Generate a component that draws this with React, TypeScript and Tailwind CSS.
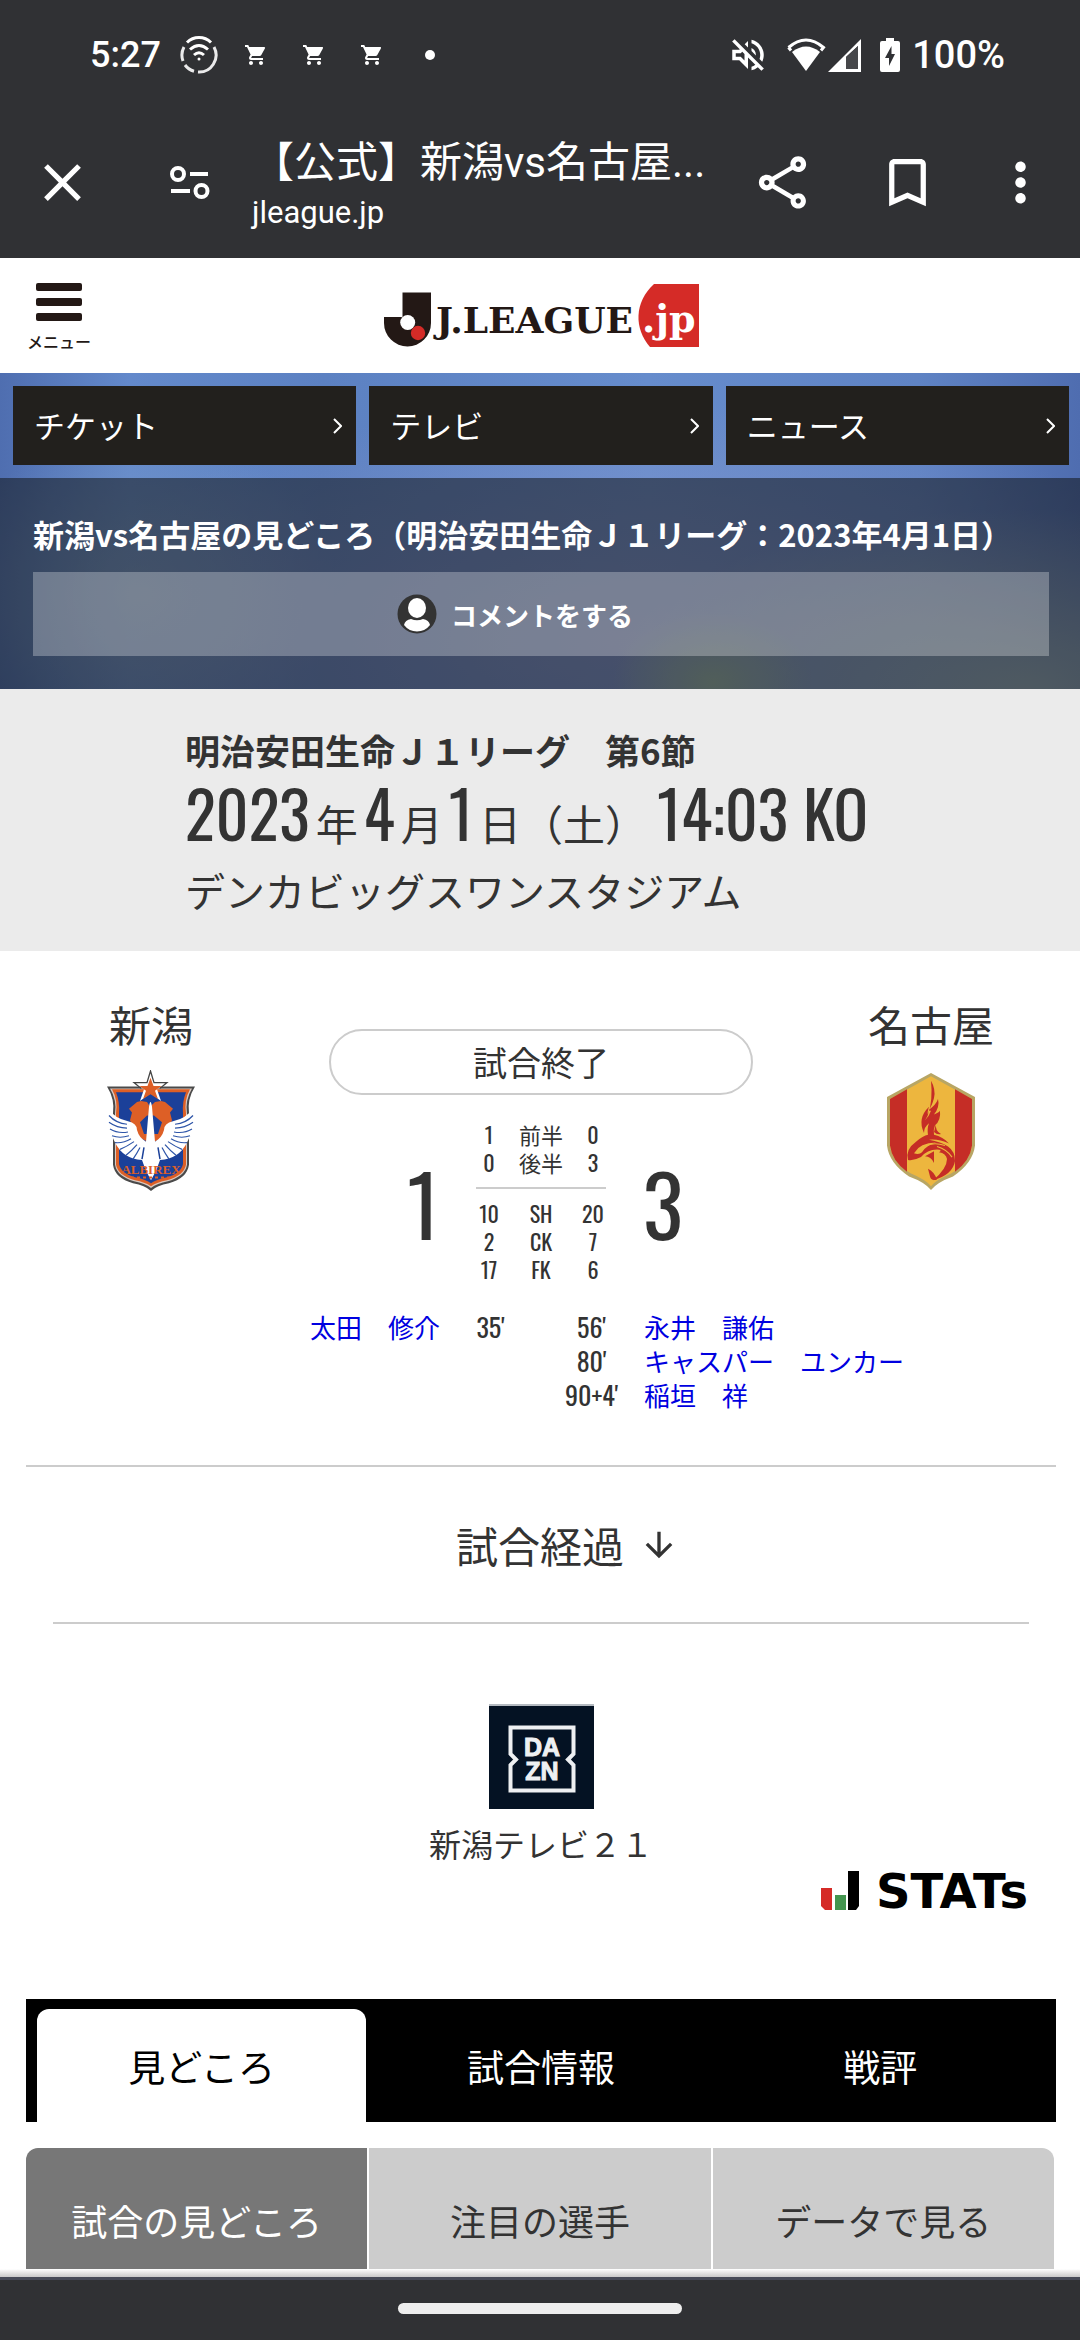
import React from "react"
import {
  MdArrowDownward,
  MdBookmarkBorder,
  MdClose,
  MdMoreVert,
  MdOutlineShare,
  MdOutlineVolumeOff,
  MdShoppingCart,
} from "react-icons/md"

const NARROW =
  "font-[family-name:Oswald,'Liberation_Sans_Narrow','Roboto_Condensed','Open_Sans_Condensed',Roboto,'Noto_Sans_CJK_JP',sans-serif]"

const links = ["チケット", "テレビ", "ニュース"]

const halves = [
  ["1", "前半", "0"],
  ["0", "後半", "3"],
]

const stats = [
  ["10", "SH", "20"],
  ["2", "CK", "7"],
  ["17", "FK", "6"],
]

const homeGoals = [{name: "太田　修介", time: "35'"}]

const awayGoals = [
  {name: "永井　謙佑", time: "56'"},
  {name: "キャスパー　ユンカー", time: "80'"},
  {name: "稲垣　祥", time: "90+4'"},
]

const tabs = ["見どころ", "試合情報", "戦評"]
const subTabs = ["試合の見どころ", "注目の選手", "データで見る"]

/**
 * Match preview page of the league site, inside a mobile browser tab
 */
export default function App() {
  return (
    <div className="flex min-h-screen w-full flex-col bg-white font-['Noto_Sans_CJK_JP',sans-serif] text-[#333]">
      <StatusBar />
      <BrowserBar />
      <SiteHeader />
      <Hero />
      <MatchInfo />
      <main className="flex flex-col">
        <Scoreboard />
        <Goals />
        <Broadcast />
        <Tabs />
      </main>
      <footer className="mt-auto">
        <div className="h-2 bg-linear-to-b from-white to-[#c9c9c9]" />
        <div className="flex h-[63px] items-center justify-center border-t-3 border-[#474b58] bg-[#303134] pb-1">
          <div className="h-[11px] w-[284px] rounded-full bg-[#eee]" />
        </div>
      </footer>
    </div>
  )
}

function StatusBar() {
  return (
    <div className="flex h-[106px] items-center justify-between bg-[#303134] pt-1 pr-[75px] pl-[90px] font-['Roboto',sans-serif] text-white">
      <div className="flex items-center">
        <span className="text-[36px] leading-[40px] font-medium">5:27</span>
        <svg
          className="ml-[19px] size-[38px]"
          viewBox="0 0 38 38"
          fill="none"
          stroke="currentColor"
          strokeWidth="3"
        >
          <path d="M7 6.500A17 17 0 0 1 31 6.500" />
          <path
            d="M34 11A17 17 0 0 1 18 36M14 35.300A17 17 0 0 1 5 29M3 25A17 17 0 0 1 4 11"
            opacity=".9"
          />
          <path d="M10 13.500Q19 5.500 28 13.500M14 19Q19 14.500 24 19" />
          <circle cx="19" cy="23" r="1.500" fill="currentColor" stroke="none" />
        </svg>
        <div className="ml-[26px] flex gap-[34px]">
          <MdShoppingCart className="size-6" />
          <MdShoppingCart className="size-6" />
          <MdShoppingCart className="size-6" />
        </div>
        <span className="ml-[41px] size-[10px] rounded-full bg-white" />
      </div>
      <div className="flex items-center">
        <MdOutlineVolumeOff className="size-[42px]" />
        <svg className="ml-[17px] h-[34px] w-[40px]" viewBox="0 0 40 34">
          <path
            d="M2.500 9.500Q20 -5.500 37.500 9.500L35 12.500"
            fill="none"
            stroke="currentColor"
            strokeWidth="3"
          />
          <path d="M2.500 9.500L5 12.500" stroke="currentColor" strokeWidth="3" />
          <path d="M6 14Q20 3 34 14L20 33Z" fill="currentColor" />
        </svg>
        <svg className="ml-[2px] h-[34px] w-[34px]" viewBox="0 0 34 34">
          <path
            fillRule="evenodd"
            d="M0 34L33 1V34ZM18 19V31H30V8Z"
            fill="currentColor"
          />
          <path d="M18 19V31H30V8Z" fill="#46474a" />
        </svg>
        <svg className="ml-[18px] h-[34px] w-5" viewBox="0 0 20 34">
          <path
            d="M6 0H14V3H18Q20 3 20 5V32Q20 34 18 34H2Q0 34 0 32V5Q0 3 2 3H6Z"
            fill="currentColor"
          />
          <path d="M11.500 8L5 20H9V28L15 16H11.500Z" fill="#303134" />
        </svg>
        <span className="ml-3 text-[38px] leading-[40px] font-medium">
          100%
        </span>
      </div>
    </div>
  )
}

function BrowserBar() {
  return (
    <div className="flex h-[152px] items-center bg-[#303134] pr-[28px] pl-[31px] font-['Roboto','Noto_Sans_CJK_JP',sans-serif] text-white">
      <button aria-label="閉じる" type="button">
        <MdClose className="size-[63px]" />
      </button>
      <button className="ml-16" aria-label="サイト情報" type="button">
        <svg
          className="size-[63px]"
          viewBox="0 0 63 63"
          fill="none"
          stroke="currentColor"
          strokeWidth="4"
        >
          <circle cx="20" cy="23" r="6" />
          <circle cx="43.500" cy="40" r="6" />
          <path d="M32 23H50M13 40H32" />
        </svg>
      </button>
      <div className="ml-[31px] min-w-0 flex-1 pt-[6px]">
        <h1 className="text-[42px] leading-[56px] whitespace-nowrap">
          【公式】新潟vs名古屋...
        </h1>
        <p className="text-[31px] leading-[44px]">jleague.jp</p>
      </div>
      <div className="flex items-center gap-[62px]">
        <button aria-label="共有" type="button">
          <MdOutlineShare className="size-[63px]" />
        </button>
        <button aria-label="ブックマーク" type="button">
          <MdBookmarkBorder className="size-[63px]" />
        </button>
        <button className="-ml-3" aria-label="その他" type="button">
          <MdMoreVert className="size-[63px]" />
        </button>
      </div>
    </div>
  )
}

function SiteHeader() {
  return (
    <header className="grid h-[115px] grid-cols-[1fr_auto_1fr] items-center pr-6 pl-[26px]">
      <button
        className="flex w-[66px] flex-col items-center pt-1 text-[#231815]"
        type="button"
      >
        <span className="flex flex-col gap-[7px]">
          <span className="h-2 w-[46px] rounded-xs bg-[#231815]" />
          <span className="h-2 w-[46px] rounded-xs bg-[#231815]" />
          <span className="h-2 w-[46px] rounded-xs bg-[#231815]" />
        </span>
        <span className="mt-2 text-[16px] leading-[24px] font-medium whitespace-nowrap">
          メニュー
        </span>
      </button>
      <a href="#top" aria-label="J.LEAGUE.jp">
        <svg className="h-[63px] w-[315px]" viewBox="0 0 315 63">
          <path
            d="M18.500 8.500H47V39A23.500 23.500 0 0 1 0 39V33H18.500Z"
            fill="#231815"
          />
          <circle cx="23.700" cy="38.500" r="7.500" fill="#fff" />
          <circle cx="34" cy="49" r="7.200" fill="#d52b27" />
          <path d="M270 0H315V63H266C250 45 250 18 270 0Z" fill="#d52b27" />
          <text
            className="font-['DejaVu_Serif',serif] text-[36px] font-bold"
            x="52"
            y="49"
            fill="#231815"
          >
            J.LEAGUE
          </text>
          <text
            className="font-['DejaVu_Serif',serif] text-[38px] font-bold"
            x="258"
            y="48"
            fill="#fff"
          >
            .jp
          </text>
        </svg>
      </a>
    </header>
  )
}

function Hero() {
  return (
    <section className="bg-[radial-gradient(100px_70px_at_66%_98%,#a9c497aa,transparent),radial-gradient(420px_180px_at_95%_100%,#a5b8b8cc,transparent),radial-gradient(600px_240px_at_58%_85%,#979ccfaa,transparent),radial-gradient(200px_160px_at_13%_70%,#86a3c4aa,transparent),linear-gradient(90deg,#4f6eb0,#6389cb_12%,#5c81c2_30%,#668ccc_60%,#5f83c4_85%,#4f6db0)] text-white">
      <nav className="grid grid-cols-3 gap-[13px] px-[13px] py-[13px] pr-[11px]">
        {links.map((label) => (
          <a
            className="flex h-[79px] items-center justify-between bg-[#22201d] pr-[14px] pl-[21px] text-[31px]"
            href="#top"
            key={label}
          >
            {label}
            <svg
              className="h-4 w-[9px]"
              viewBox="0 0 9 16"
              fill="none"
              stroke="currentColor"
              strokeWidth="2"
            >
              <path d="M1 1L8 8L1 15" />
            </svg>
          </a>
        ))}
      </nav>
      <div className="bg-[#131619]/55 px-[33px] pt-8 pb-[33px] pr-[31px]">
        <h2 className="text-[31px] leading-[48px] font-bold whitespace-nowrap">
          新潟vs名古屋の見どころ（明治安田生命Ｊ１リーグ：2023年4月1日）
        </h2>
        <button
          className="mt-[14px] flex h-[84px] w-full items-center justify-center gap-[14px] bg-white/28 pr-[52px] text-[26px] font-bold"
          type="button"
        >
          <svg className="size-10" viewBox="0 0 40 40">
            <circle cx="20" cy="20" r="19.500" fill="#333" />
            <ellipse cx="20" cy="14" rx="9" ry="10" fill="#fff" />
            <path
              d="M7 31Q8 26 14 25Q20 27.500 26 25Q32 26 33 31Q28 37.500 20 37.500Q12 37.500 7 31Z"
              fill="#fff"
            />
          </svg>
          コメントをする
        </button>
      </div>
    </section>
  )
}

function MatchInfo() {
  return (
    <section className="bg-[#ebebeb] pt-9 pb-9">
      <div className="mx-auto w-[710px] max-w-full">
        <p className="text-[35px] leading-[50px] font-bold">
          明治安田生命Ｊ１リーグ　第6節
        </p>
        <p
          className={`flex h-[90px] items-baseline text-[42px] leading-[74px] whitespace-nowrap ${NARROW}`}
        >
          <span className="text-[64px]">2023</span>
          <span className="mx-[6px]">年</span>
          <span className="text-[64px]">4</span>
          <span className="mx-[6px]">月</span>
          <span className="text-[64px]">1</span>
          <span className="mr-[10px] ml-[6px]">日（土）</span>
          <span className="text-[64px]">14:03 KO</span>
        </p>
        <p className="text-[40px] leading-[50px]">
          デンカビッグスワンスタジアム
        </p>
      </div>
    </section>
  )
}

function Scoreboard() {
  return (
    <section className="grid grid-cols-[250px_1fr_250px] pr-6 pl-[26px]">
      <Team name="新潟">
        <AlbirexCrest />
      </Team>
      <div className="flex flex-col items-center pt-[78px]">
        <p className="h-[66px] w-[424px] rounded-full border-2 border-[#ccc] text-center text-[34px] leading-[62px]">
          試合終了
        </p>
        <div
          className={`mt-[25px] flex items-center gap-[37px] ${NARROW}`}
        >
          <span className="w-[50px] text-right text-[84px] leading-[100px]">
            1
          </span>
          <table className="w-[130px] table-fixed text-center text-[22px] leading-[28px]">
            <tbody>
              {halves.map((row, i) => (
                <StatRow
                  className={i === 1 ? "pb-[11px]" : ""}
                  key={row[1]}
                  {...{row}}
                />
              ))}
            </tbody>
            <tbody className="border-t-2 border-[#ccc]">
              {stats.map((row, i) => (
                <StatRow
                  className={i === 0 ? "pt-[10px]" : ""}
                  key={row[1]}
                  {...{row}}
                />
              ))}
            </tbody>
          </table>
          <span className="w-[50px] text-left text-[84px] leading-[100px]">
            3
          </span>
        </div>
      </div>
      <Team name="名古屋">
        <GrampusCrest />
      </Team>
    </section>
  )
}

function StatRow({row, className}: {row: string[]; className: string}) {
  const [home, label, away] = row
  return (
    <tr>
      <td className={`w-[26px] p-0 ${className}`}>{home}</td>
      <th className={`p-0 font-normal ${className}`} scope="row">
        {label}
      </th>
      <td className={`w-[26px] p-0 ${className}`}>{away}</td>
    </tr>
  )
}

function Team({name, children}: {name: string; children: React.ReactNode}) {
  return (
    <div className="flex flex-col items-center pt-[48px]">
      <h3 className="mb-[21px] text-[42px] leading-[50px]">{name}</h3>
      {children}
    </div>
  )
}

function AlbirexCrest() {
  return (
    <svg
      className="h-[121px] w-[88px]"
      viewBox="0 0 88 125"
      preserveAspectRatio="none"
    >
      <path
        d="M0 17H88Q80 30 82 45V98Q80 112 62 117Q50 119 44 125Q38 119 26 117Q8 112 6 98V45Q8 30 0 17Z"
        fill="#4a4a4a"
      />
      <path
        d="M3 19H85Q78 31 80 45V98Q78 110 61 115Q50 117 44 122Q38 117 27 115Q10 110 8 98V45Q10 31 3 19Z"
        fill="#d8c8c0"
      />
      <path
        d="M5 20H83Q77 31 79 45V98Q77 109 60 114Q50 116 44 120Q38 116 28 114Q11 109 9 98V45Q11 31 5 20Z"
        fill="#dd5f26"
      />
      <path
        d="M9 23H79Q75 33 76 45V97Q74 107 59 111Q49 113 44 117Q39 113 29 111Q14 107 12 97V45Q13 33 9 23Z"
        fill="#1b4099"
      />
      <path
        d="M22 40L30 33L34 32L40 33L43 38L48 33L54 32L58 33L66 40L63 44L65 52L60 62L55 70L44 76L33 70L27 62L23 52L25 44Z"
        fill="#dd5f26"
      />
      <path d="M33 54L40 47H47L55 54L51 66H37Z" fill="#1b4099" />
      <path
        d="M1 40Q8 50 21 53Q30 55 30 62Q32 70 39 74L42 38Q43.500 28 45 38L48 74Q55 70 57 62Q57 55 66 53Q79 50 86 40Q88 60 80 75Q72 92 53 93Q50 104 44 114Q38 104 35 93Q16 92 8 75Q0 60 1 40Z"
        fill="#fff"
      />
      <path
        d="M2 47Q9 55 20 56M2 54Q10 60 20 60M3 61Q11 66 21 64M5 68Q13 71 22 68M8 75Q16 76 24 71M13 82Q20 79 27 74M19 88Q25 83 30 77M26 92Q30 86 33 80M86 47Q79 55 68 56M86 54Q78 60 68 60M85 61Q77 66 67 64M83 68Q75 71 66 68M80 75Q72 76 64 71M75 82Q68 79 61 74M69 88Q63 83 58 77M62 92Q58 86 55 80"
        stroke="#2e55a8"
        strokeWidth="1.200"
        fill="none"
      />
      <path d="M35 92L37 80M53 92L51 80" stroke="#1b4099" strokeWidth="1.500" />
      <text
        className="font-['Liberation_Serif',serif] text-[13px] font-bold"
        x="44"
        y="107"
        textAnchor="middle"
        fill="#dd5f26"
      >
        ALBIREX
      </text>
      <path
        d="M24 111H64"
        stroke="#dd5f26"
        strokeWidth="2"
        strokeDasharray="3 3"
      />
      <path
        d="M43.500 1L47 13H60L50 20L54 32L43.500 24L33 32L37 20L27 13H40Z"
        fill="#fff"
      />
      <path
        d="M34 19L27 13H40L43.500 1L47 13H60L53 19"
        fill="none"
        stroke="#444"
        strokeWidth="1.300"
      />
      <path
        d="M43.500 8L46.500 16.500H54.500L48 21.500L51 30L43.500 25L36 30L39 21.500L32.500 16.500H40.500Z"
        fill="#dd5f26"
      />
    </svg>
  )
}

function GrampusCrest() {
  return (
    <svg
      className="h-[121px] w-[88px]"
      viewBox="0 0 88 125"
      preserveAspectRatio="none"
    >
      <path
        d="M44 3L88 28V78Q86 96 66 110Q50 116 44 124Q38 116 22 110Q2 96 0 78V28Z"
        fill="#b8a664"
      />
      <path
        d="M44 6.500L85 30V78Q83 95 64 107Q50 113 44 120Q38 113 24 107Q5 95 3 78V30Z"
        fill="#edb63e"
      />
      <path
        d="M3 30L20 20V105Q5 94 3 78ZM85 30L68 20V105Q83 94 85 78Z"
        fill="#c52d26"
      />
      <path
        d="M44 11Q49 20 47 29Q45 37 42 41Q49 36 51 30Q53 38 47 46Q53 43 53 42Q54 52 48 57Q46 62 47 67Q56 69 62 76Q52 71 42 72Q54 74 61 79Q68 84 68 94Q66 108 46 114Q60 102 60 92Q59 86 52 85Q56 82 50 82Q40 82 34 90Q27 94 21 93Q18 82 29 74Q36 68 41 67Q40 60 42 55Q37 59 37 65Q30 50 42 38Q40 44 41 46Q46 32 44 11Z"
        fill="#c52d26"
      />
      <path
        d="M27 86Q33 75 49 75Q39 78 35 85Q32 88 27 86ZM42 42Q41 48 38 52Q42 48 44 42Z"
        fill="#edb63e"
      />
      <path
        d="M38 89L47 84V96Q44 89 38 89ZM49 56Q48 63 54 66Q50 67 47 64ZM41 102Q47 105 50 113Q44 115 43 110Z"
        fill="#c52d26"
      />
      <path
        d="M50 79Q60 82 65 90M38 79Q46 74 58 78"
        stroke="#edb63e"
        strokeWidth="1.200"
        fill="none"
      />
    </svg>
  )
}

function Goals() {
  return (
    <section className="mt-[27px] grid grid-cols-2 pr-6 pb-[53px] pl-[26px] text-[26px] leading-[34px] whitespace-nowrap">
      <ul>
        {homeGoals.map(({name, time}) => (
          <li className="flex justify-end" key={time}>
            <a className="text-[#0000e0]" href="#top">
              {name}
            </a>
            <span className={`w-[101px] text-center ${NARROW}`}>{time}</span>
          </li>
        ))}
      </ul>
      <ul>
        {awayGoals.map(({name, time}) => (
          <li className="flex" key={time}>
            <span className={`w-[101px] text-center ${NARROW}`}>{time}</span>
            <a className="ml-[2px] text-[#0000e0]" href="#top">
              {name}
            </a>
          </li>
        ))}
      </ul>
    </section>
  )
}

function Broadcast() {
  return (
    <section className="mr-6 ml-[26px] flex flex-col items-center border-t-2 border-[#ccc] px-[27px]">
      <button
        className="flex w-full items-center justify-center gap-[15px] border-b-2 border-[#ccc] py-[50px] pl-[53px] text-[42px] leading-[55px]"
        type="button"
      >
        試合経過
        <MdArrowDownward className="size-[40px]" />
      </button>
      <svg
        className="mt-20 size-[105px]"
        viewBox="0 0 105 105"
        role="img"
        aria-label="DAZN"
      >
        <path d="M0 0H105V105H0Z" fill="#041223" />
        <path d="M0 0H105V2H0Z" fill="#b4bac0" />
        <path
          d="M21.500 50V23.500H84.500V50L79 55.500L84.500 61V86.500H21.500V61L27 55.500Z"
          fill="none"
          stroke="#eef0f2"
          strokeWidth="4"
        />
        <g
          className="font-['Liberation_Sans',sans-serif] text-[25px] font-bold"
          fill="#eef0f2"
          stroke="#eef0f2"
          textAnchor="middle"
        >
          <text x="53" y="52">
            DA
          </text>
          <text x="53" y="76">
            ZN
          </text>
        </g>
      </svg>
      <p className="mt-[14px] text-[32px] leading-[40px]">新潟テレビ２１</p>
      <svg
        className="mb-20 h-[56px] w-[208px] self-end"
        viewBox="0 -8 208 56"
        role="img"
        aria-label="STATS"
      >
        <path d="M0 17H11V39H4L0 35Z" fill="#d52b27" />
        <path d="M14 24H25V39H14Z" fill="#43954f" />
        <path d="M27 0H38V35L35 39H27Z" fill="#000" />
        <text
          className="font-['DejaVu_Sans',sans-serif] text-[48px] font-bold"
          x="55"
          y="37"
          fill="#000"
        >
          STATs
        </text>
      </svg>
    </section>
  )
}

function Tabs() {
  const [tab, setTab] = React.useState(tabs[0])
  const [subTab, setSubTab] = React.useState(subTabs[0])

  return (
    <section className="pr-6 pl-[26px]">
      <div className="grid grid-cols-3 gap-[10px] bg-black px-[11px] pt-[10px]">
        {tabs.map((label) => (
          <button
            className={`h-[113px] rounded-t-xl pt-[2px] text-[37px] ${
              tab === label ? "bg-white text-black" : "text-white"
            }`}
            key={label}
            onClick={() => setTab(label)}
            type="button"
          >
            {label}
          </button>
        ))}
      </div>
      <div className="mt-[26px] mr-[2px] grid grid-cols-3 gap-[2px] overflow-hidden rounded-t-xl">
        {subTabs.map((label) => (
          <button
            className={`h-[121px] pt-[22px] text-[36px] ${
              subTab === label ? "bg-[#777] text-white" : "bg-[#ccc]"
            }`}
            key={label}
            onClick={() => setSubTab(label)}
            type="button"
          >
            {label}
          </button>
        ))}
      </div>
    </section>
  )
}
